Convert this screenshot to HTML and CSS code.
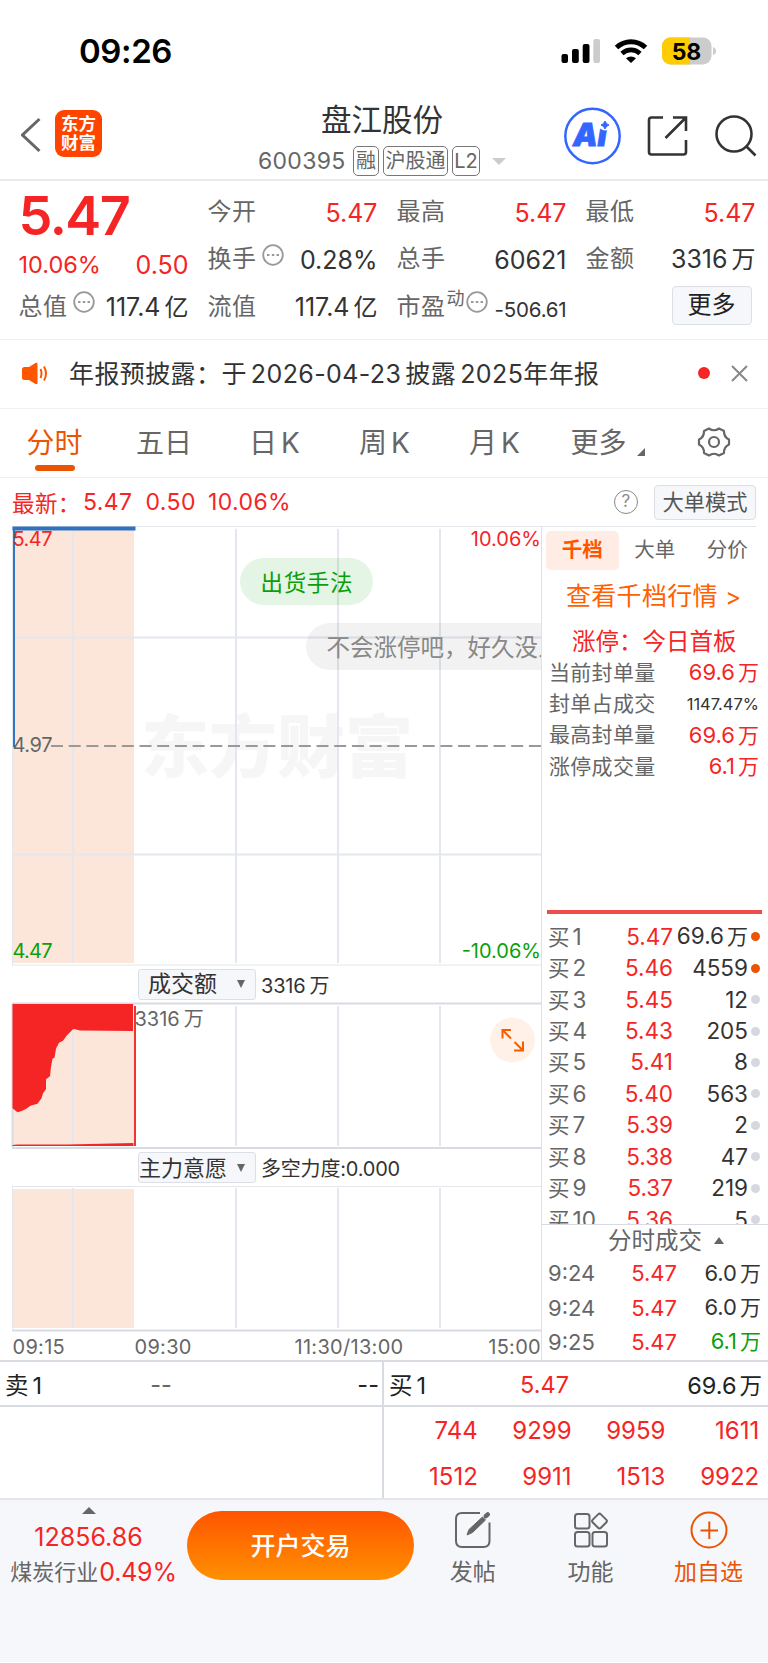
FILE: index.html
```html
<!DOCTYPE html>
<html lang="zh-CN">
<head>
    <meta charset="UTF-8">
    <meta name="viewport" content="width=device-width, initial-scale=1.0">
    <title>盘江股份 600395</title>
    <link rel="stylesheet" href="styles.css">
</head>
<body>
    <div class="status-bar">
        <span class="time">09:26</span>
        <svg class="status-icons" width="160" height="32" viewBox="558 35 160 32">
            <rect x="561.5" y="54" width="6.5" height="9" rx="2"/>
            <rect x="572" y="49" width="6.8" height="14" rx="2"/>
            <rect x="582.7" y="44" width="6.8" height="19" rx="2"/>
            <rect x="593.3" y="39" width="6.7" height="24" rx="2" fill="#ccc"/>
            <path d="M616.5 47.5a21 21 0 0 1 29 0" fill="none" stroke="#000" stroke-width="5"/>
            <path d="M622 53.500a13 13 0 0 1 18 0" fill="none" stroke="#000" stroke-width="4.600"/>
            <path d="M626 58.300a7.500 7.500 0 0 1 10 0l-5 4.800z"/>
            <rect x="662" y="37.500" width="49.500" height="27" rx="8.500" fill="#ccc"/>
            <path d="M690 37.500h-19.500a8.500 8.500 0 0 0-8.500 8.500v10a8.500 8.500 0 0 0 8.500 8.500H690z" fill="#ffcc00"/>
            <path d="M713 47q3 1 3 4t-3 4z" fill="#ccc"/>
            <text class="battery-text" x="686.500" y="59.500" text-anchor="middle">58</text>
        </svg>
    </div>

    <div class="header">
        <div class="header-left">
            <svg width="20" height="36" viewBox="21 118 20 36" fill="none" stroke="#666" stroke-width="3"><path d="M39.500 120L22.500 136l17 16"/></svg>
            <div class="logo">东方<br>财富</div>
        </div>
        <div class="header-title">
            <h1>盘江股份</h1>
            <div class="sub">
                <span class="code">600395</span>
                <span class="tag">融</span>
                <span class="tag tag-wide">沪股通</span>
                <span class="tag">L2</span>
                <i class="arrow"></i>
            </div>
        </div>
        <svg class="header-icons" width="200" height="60" viewBox="562 106 200 60" fill="none" stroke="#333" stroke-width="2.600">
            <circle cx="592.500" cy="136" r="27.200" stroke="#3366ff" stroke-width="2.500"/>
            <text class="ai" x="573 597.5" y="146" stroke="#3366ff" stroke-width=".8">Ai</text>
            <circle cx="605" cy="124" r="6.500" fill="#fff" stroke="none"/>
            <path d="M605 121q1 3 4 4q-3 1-4 4q-1-3-4-4q3-1 4-4z" fill="#3366ff" stroke="#3366ff" stroke-width="1"/>
            <path d="M663 117.500h-11.500q-2.500 0-2.500 2.500v32q0 2.500 2.500 2.500h32q2.500 0 2.500-2.500v-12M673 117.500h13V131M685.500 118L665.500 138"/>
            <circle cx="734" cy="134" r="17.500"/>
            <path d="M746.500 146.500l9 9"/>
        </svg>
    </div>

    <div class="quote">
        <div class="col col-price">
            <div class="big-price">5.47</div>
            <div class="row row-change red"><span class="percent">10.06%</span><span>0.50</span></div>
            <div class="row"><span class="label">总值<svg class="dots" width="22" height="22" viewBox="0 0 22 22"><circle cx="11" cy="11" r="9.800"/><path d="M5 11h2.500M9.800 11h2.500M14.500 11h2.500"/></svg></span><span>117.4<em>亿</em></span></div>
        </div>
        <div class="col">
            <div class="row"><span class="label">今开</span><span class="red">5.47</span></div>
            <div class="row"><span class="label">换手<svg class="dots" width="22" height="22" viewBox="0 0 22 22"><circle cx="11" cy="11" r="9.800"/><path d="M5 11h2.500M9.800 11h2.500M14.500 11h2.500"/></svg></span><span>0.28%</span></div>
            <div class="row"><span class="label">流值</span><span>117.4<em>亿</em></span></div>
        </div>
        <div class="col">
            <div class="row"><span class="label">最高</span><span class="red">5.47</span></div>
            <div class="row"><span class="label">总手</span><span>60621</span></div>
            <div class="row"><span class="label">市盈<sup>动</sup><svg class="dots dots-tight" width="22" height="22" viewBox="0 0 22 22"><circle cx="11" cy="11" r="9.800"/><path d="M5 11h2.500M9.800 11h2.500M14.500 11h2.500"/></svg></span><span class="pe">-506.61</span></div>
        </div>
        <div class="col">
            <div class="row"><span class="label">最低</span><span class="red">5.47</span></div>
            <div class="row"><span class="label">金额</span><span>3316<em>万</em></span></div>
            <div class="row row-more"><button class="more">更多</button></div>
        </div>
    </div>

    <div class="notice">
        <svg width="26" height="22" viewBox="22 362 26 22"><path d="M24.500 367h4.500l6.500-4q2-.8 2 1v19q0 1.800-2 1l-6.500-4H24.500q-2.500 0-2.500-2.500v-8q0-2.500 2.500-2.500z" fill="#ff5500"/><path d="M40.500 369q2 4.500 0 9M44 366.500q4 7 0 14" fill="none" stroke="#ff5500" stroke-width="2"/></svg>
        <p>年报预披露：于<em>2026-04-23</em><em>披露</em><em>2025</em>年年报</p>
        <i class="red-dot"></i>
        <svg width="17" height="17" viewBox="0 0 17 17" stroke="#888" stroke-width="2"><path d="M1 1l15 15M16 1L1 16"/></svg>
    </div>

    <div class="tabs">
        <a class="active">分时</a>
        <a>五日</a>
        <a>日<em>K</em></a>
        <a>周<em>K</em></a>
        <a>月<em>K</em></a>
        <a class="tab-more">更多<i></i></a>
        <svg width="34" height="32" viewBox="696 426 34 32" fill="none" stroke="#666" stroke-width="2.200" stroke-linejoin="round"><path d="M708 428.500q5 3.500 10 0l5 2.500q-.3 6 5 8.500v5q-5.300 2.500-5 8.500l-5 2.500q-5-3.500-10 0l-5-2.500q.3-6-5-8.500v-5q5.300-2.500 5-8.500z"/><circle cx="713" cy="442" r="5"/></svg>
    </div>

    <div class="latest">
        <span class="latest-label">最新：</span><span class="v1">5.47</span><span class="v2">0.50</span><span class="v3">10.06%</span>
        <span class="help">?</span>
        <button class="mode">大单模式</button>
    </div>

    <div class="main">
        <div class="charts">
            <svg class="chart" width="541" height="440" viewBox="0 526 541 440">
                <rect x="12" y="530" width="122" height="433" fill="#fce6da"/>
                <text class="watermark" x="141" y="772" textLength="272">东方财富</text>
                <path class="grid" d="M73 529v434M236 529v434M338 529v434M440 529v434M12 637.500h529M12 854.500h529"/>
                <path class="frame" d="M12 526.500h529M12.500 527v438M12 965h529"/>
                <path d="M51 746h490" stroke="#999" stroke-width="2" stroke-dasharray="12 5.700"/>
                <path d="M14 747V528.500" fill="none" stroke="#2f78c8" stroke-width="2"/>
                <path d="M12.500 528.500H135.500" fill="none" stroke="#2f72c0" stroke-width="4"/>
                <text class="red" x="12.500" y="546" textLength="40">5.47</text>
                <text class="red" x="541" y="546" text-anchor="end">10.06%</text>
                <text class="gray" x="12.500" y="752" textLength="40">4.97</text>
                <text class="green" x="12.500" y="958" textLength="40">4.47</text>
                <text class="green" x="541" y="958" text-anchor="end">-10.06%</text>
                <rect x="240" y="558" width="133" height="47" rx="23.500" fill="#00a000" fill-opacity=".1"/>
                <text class="pill-green" x="260.500" y="590.500" textLength="92">出货手法</text>
                <path d="M541 623H329.500a23.500 23.500 0 0 0 0 47H541z" fill="#000" fill-opacity=".05"/>
                <text class="pill-gray" x="326.500" y="655.500">不会涨停吧，好久没人</text>
            </svg>
            <div class="indicator">
                <span class="select">成交额<i></i></span><span>3316<em>万</em></span>
            </div>
            <svg class="chart" width="541" height="147" viewBox="0 1002 541 147">
                <rect x="12" y="1004" width="122" height="142" fill="#fce6da"/>
                <path class="grid" d="M73 1006v140M236 1006v140M338 1006v140M440 1006v140"/>
                <path class="frame frame-dark" d="M12 1003.500h529M12.500 1004v143M12 1148h529"/>
                <path d="M12.500 1004H133v27l-53-.5-5-1.200-2 0-6 6-4 5.500-4 2-3 6-1.500 9-2 1-1.500 8-1 9.500-4 3v10l-3 4-1.500 5-4 5.500-7 2-5 3.500-4.500 2-3.500 1-5-4z" fill="#f52525"/>
                <path d="M12.500 1146v-1l5-.6h50l66-1.400v3z" fill="#f52525"/>
                <path d="M135 1006v140" stroke="#f03535" stroke-width="2"/>
                <text class="gray" x="134.500" y="1025.500">3316<tspan dx="4">万</tspan></text>
                <circle cx="512.500" cy="1040" r="22.500" fill="#fff0e8"/>
                <path d="M511 1030h-8.500v8.500M503 1030.500l8 8M514 1050.500h9v-9M522.500 1050l-8-8" fill="none" stroke="#f55e00" stroke-width="2"/>
            </svg>
            <div class="indicator">
                <span class="select select-wide">主力意愿<i></i></span><span class="force">多空力度:0.000</span>
            </div>
            <svg class="chart" width="541" height="146" viewBox="0 1186 541 146">
                <rect x="12" y="1189" width="122" height="139" fill="#fce6da"/>
                <path class="grid" d="M73 1188v140M236 1188v140M338 1188v140M440 1188v140"/>
                <path class="frame" d="M12 1186.500h529M12.500 1187v142"/>
                <path class="frame frame-dark" d="M12 1330.500h529"/>
            </svg>
            <div class="axis"><span>09:15</span><span>09:30</span><span>11:30/13:00</span><span>15:00</span></div>
        </div>

        <div class="side">
            <div class="side-tabs"><span class="on">千档</span><span>大单</span><span>分价</span></div>
            <a class="depth-link">查看千档行情 <b>&gt;</b></a>
            <div class="limit-title red">涨停：今日首板</div>
            <div class="limit">
                <div><span>当前封单量</span><span class="red">69.6<em>万</em></span></div>
                <div><span>封单占成交</span><span class="small">1147.47%</span></div>
                <div><span>最高封单量</span><span class="red">69.6<em>万</em></span></div>
                <div><span>涨停成交量</span><span class="red">6.1<em>万</em></span></div>
            </div>
            <div class="book">
                <div><span>买<em>1</em></span><span class="red">5.47</span><span>69.6<em>万</em></span><i class="hot"></i></div>
                <div><span>买<em>2</em></span><span class="red">5.46</span><span>4559</span><i class="hot"></i></div>
                <div><span>买<em>3</em></span><span class="red">5.45</span><span>12</span><i></i></div>
                <div><span>买<em>4</em></span><span class="red">5.43</span><span>205</span><i></i></div>
                <div><span>买<em>5</em></span><span class="red">5.41</span><span>8</span><i></i></div>
                <div><span>买<em>6</em></span><span class="red">5.40</span><span>563</span><i></i></div>
                <div><span>买<em>7</em></span><span class="red">5.39</span><span>2</span><i></i></div>
                <div><span>买<em>8</em></span><span class="red">5.38</span><span>47</span><i></i></div>
                <div><span>买<em>9</em></span><span class="red">5.37</span><span>219</span><i></i></div>
                <div><span>买<em>10</em></span><span class="red">5.36</span><span>5</span><i></i></div>
            </div>
            <div class="deals-title">分时成交<i></i></div>
            <div class="deals">
                <div><span>9:24</span><span class="red">5.47</span><span>6.0<em>万</em></span></div>
                <div><span>9:24</span><span class="red">5.47</span><span>6.0<em>万</em></span></div>
                <div><span>9:25</span><span class="red">5.47</span><span class="green">6.1<em>万</em></span></div>
            </div>
        </div>
    </div>

    <div class="level">
        <div class="sell">
            <div class="level-head"><span>卖<em>1</em></span><span class="gray">--</span><span>--</span></div>
        </div>
        <div class="buy">
            <div class="level-head"><span>买<em>1</em></span><span class="red">5.47</span><span>69.6<em>万</em></span></div>
            <div class="queue red">
                <span>744</span><span>9299</span><span>9959</span><span>1611</span>
                <span>1512</span><span>9911</span><span>1513</span><span>9922</span>
            </div>
        </div>
    </div>

    <div class="footer">
        <div class="industry">
            <i></i>
            <div class="index red">12856.86</div>
            <div class="name">煤炭行业<span class="red">0.49%</span></div>
        </div>
        <button class="trade">开户交易</button>
        <div class="actions">
            <div>
                <svg width="40" height="40" viewBox="453 1510 40 40" fill="none" stroke="#666" stroke-width="2"><path d="M480 1513h-18q-6 0-6 6v22q0 6 6 6h21.500q6 0 6-6v-18.500"/><path d="M467 1535l2-5.500 13.500-12.500 3 3-13 12.500z" fill="#666" stroke-width="1"/><path d="M485.800 1516.200l2-1.800" stroke-width="4.500" stroke-linecap="round"/></svg>
                <span>发帖</span>
            </div>
            <div>
                <svg width="40" height="40" viewBox="571 1510 40 40" fill="none" stroke="#666" stroke-width="2"><rect x="575" y="1514" width="14.500" height="14.500" rx="2.500"/><rect x="575" y="1532" width="14.500" height="14.500" rx="2.500"/><rect x="592.500" y="1532" width="14.500" height="14.500" rx="2.500"/><rect x="593.800" y="1515.300" width="11.500" height="11.500" rx="2" transform="rotate(45 599.500 1521)"/></svg>
                <span>功能</span>
            </div>
            <div class="add">
                <svg width="40" height="40" viewBox="688.500 1510 40 40" fill="none" stroke="#ea5504" stroke-width="2"><circle cx="708.500" cy="1530" r="17.500"/><path d="M700 1530.500h17.500M708.800 1521.500v17.500"/></svg>
                <span>加自选</span>
            </div>
        </div>
    </div>
</body>
</html>
```
FILE: styles.css
```css
* {
    box-sizing: border-box;
}
body {
    margin: 0;
    width: 768px;
    background-color: #fff;
    color: #333;
    font-family: Inter, "Noto Sans CJK SC", sans-serif;
    font-size: 24px;
    text-autospace: no-autospace;
}
em, i {
    font-style: normal;
}
em {
    margin-left: 4px;
}
svg {
    flex: none;
}
button {
    font-family: inherit;
    padding: 0;
}
.red {
    color: #f52525;
    fill: #f52525;
}
.green {
    color: #0a9f0a;
    fill: #0a9f0a;
}
.gray {
    color: #666;
    fill: #666;
}

/* status bar */
.status-bar {
    height: 102px;
    display: flex;
    align-items: center;
    justify-content: space-between;
    padding: 0 50px 0 79px;
    color: #000;
}
.time {
    font-size: 33px;
    font-weight: 600;
    letter-spacing: -0.4px;
}
.battery-text {
    font-size: 23px;
    font-weight: 700;
}

/* header */
.header {
    height: 79px;
    border-bottom: 2px solid #ebebeb;
    display: grid;
    grid-template-columns: 258px 1fr 206px;
    padding-bottom: 9px;
}
.header-left {
    display: flex;
    align-items: center;
    gap: 14px;
    padding-left: 21px;
    padding-bottom: 8px;
    margin-top: 4px;
    height: 64px;
}
.header-left svg {
    margin-top: 1px;
}
.logo {
    width: 47px;
    height: 47px;
    margin-top: -1px;
    border-radius: 9px;
    background-color: #ff4400;
    color: #fff;
    font-size: 17.5px;
    font-weight: 700;
    line-height: 19px;
    text-align: center;
    padding-top: 4px;
}
.header-title h1 {
    margin: 0;
    font-size: 30.5px;
    font-weight: 400;
    line-height: 35px;
    padding-left: 63px;
}
.sub {
    display: flex;
    align-items: center;
    margin-top: 9px;
    height: 30px;
    color: #666;
}
.code {
    font-size: 23px;
    width: 95px;
    letter-spacing: 0.3px;
}
.tag {
    border: 1px solid #777;
    border-radius: 5px;
    width: 26px;
    height: 30px;
    margin-right: 4px;
    font-size: 20px;
    line-height: 28px;
    display: flex;
    justify-content: center;
}
.tag-wide {
    width: 65px;
}
.tag:nth-of-type(4) {
    width: 28px;
}
.arrow {
    border: 7px solid transparent;
    border-top-color: #ccc;
    border-bottom: 0;
    margin-left: 8px;
}
.header-icons {
    margin-top: 4px;
}
.ai {
    font-size: 31px;
    font-weight: 900;
    font-style: italic;
    fill: #3366ff;
}

/* quote */
.quote {
    height: 159px;
    border-bottom: 1px solid #efefef;
    display: grid;
    grid-template-columns: repeat(4, 170px);
    column-gap: 19px;
    padding: 8px 0 0 18.5px;
}
.row {
    height: 47.3px;
    display: flex;
    align-items: center;
    justify-content: space-between;
    white-space: nowrap;
    font-size: 25px;
    line-height: 30px;
}
.row em {
    font-size: 24px;
}
.label {
    display: flex;
    align-items: center;
    color: #666;
    font-size: 24px;
    letter-spacing: 0.5px;
    padding-bottom: 1px;
}
.big-price {
    height: 54px;
    line-height: 54px;
    font-size: 54px;
    font-weight: 600;
    letter-spacing: -1.5px;
    color: #f52525;
}
.row-change {
    height: 40.600px;
    padding-top: 4px;
}
.percent {
    font-size: 23.500px;
}
.dots {
    margin: -9px 0 0 5px;
    fill: none;
    stroke: #999;
    stroke-width: 1.8;
}
.dots-tight {
    margin-left: 1px;
}
.label sup {
    font-size: 18px;
    line-height: 18px;
    margin: -15px 0 0 1px;
}
.pe {
    font-size: 20.5px;
    letter-spacing: -0.2px;
    padding-top: 6px;
}
.row-more {
    justify-content: flex-end;
}
.more {
    width: 80px;
    height: 39px;
    margin-right: 4px;
    margin-bottom: 4px;
    border: 1px solid #dcdfe6;
    border-radius: 4px;
    background-color: #f6f7fa;
    color: #222;
    font-size: 24px;
    line-height: 36px;
}

/* notice */
.notice {
    height: 69px;
    border-bottom: 1px solid #efefef;
    display: flex;
    align-items: center;
    padding: 0 20px 2px 22px;
}
.notice p {
    margin: -3px auto 0 21px;
    font-size: 25px;
    letter-spacing: 0.4px;
}
.red-dot {
    width: 12px;
    height: 12px;
    border-radius: 50%;
    background-color: #f52525;
    margin-right: 21px;
}

/* tabs */
.tabs {
    height: 69px;
    border-bottom: 1px solid #efefef;
    display: grid;
    grid-template-columns: 109px 110px 111px 109px 111px 97px 1fr;
    align-items: center;
    justify-items: center;
    padding-bottom: 4px;
    font-size: 28px;
    color: #666;
}
.tabs svg {
    margin: 2px 0 0 12px;
}
.tabs a {
    position: relative;
}
.tabs .active {
    color: #ea5504;
}
.tabs .active::after {
    content: "";
    position: absolute;
    left: 9px;
    bottom: -10px;
    width: 40px;
    height: 6px;
    border-radius: 3px;
    background-color: #ea5504;
}
.tab-more i {
    position: absolute;
    right: -18px;
    bottom: 5px;
    border-left: 8px solid transparent;
    border-bottom: 8px solid #666;
}

/* latest price */
.latest {
    height: 48px;
    display: flex;
    align-items: center;
    padding: 0 12px 0 12px;
    color: #f52525;
    font-size: 23px;
    letter-spacing: 0.4px;
}
.latest-label {
    width: 71px;
    white-space: nowrap;
    font-size: 22.5px;
}
.v1, .v2 {
    width: 62.500px;
}
.v3 {
    margin-right: auto;
}
.help {
    width: 24px;
    height: 24px;
    border: 1.5px solid #888;
    border-radius: 50%;
    color: #888;
    font-size: 17px;
    line-height: 21px;
    text-align: center;
    margin-right: 16px;
}
.mode {
    width: 102px;
    height: 35px;
    border: 1px solid #dcdfe6;
    border-radius: 4px;
    background-color: #f6f7fa;
    color: #555;
    font-size: 21.3px;
    line-height: 32px;
}

/* charts */
.main {
    display: flex;
    height: 834px;
}
.charts {
    width: 541px;
}
.chart {
    display: block;
    font-size: 20px;
}
.grid {
    stroke: #e4e7ed;
    stroke-width: 2;
}
.frame {
    stroke: #e4e6eb;
}
.frame-dark {
    stroke: #d8dbe2;
    stroke-width: 2;
}
.watermark {
    font-size: 68px;
    font-weight: 900;
    fill: #f6f6f6;
}
.pill-green {
    font-size: 22.5px;
    fill: #0a9f0a;
}
.pill-gray {
    font-size: 23.5px;
    fill: #888;
}
.indicator {
    height: 36px;
    display: flex;
    align-items: center;
    padding-left: 138px;
    font-size: 20px;
    letter-spacing: -0.2px;
}
.indicator + .chart + .indicator {
    height: 37px;
}
.select {
    width: 118px;
    height: 31px;
    margin-right: 5px;
    padding: 0 10px 0 9px;
    border: 1px solid #dcdfe6;
    border-radius: 3px;
    background-color: #f6f7fa;
    font-size: 23px;
    letter-spacing: 0;
    line-height: 28px;
    display: flex;
    align-items: center;
    justify-content: space-between;
    white-space: nowrap;
}
.select-wide {
    padding-left: 0;
    font-size: 22px;
}
.select i {
    border: 4.5px solid transparent;
    border-top: 8px solid #666;
    border-bottom: 0;
}
.axis {
    height: 29px;
    display: grid;
    grid-template-columns: 122px 160px 1fr auto;
    padding: 0 0 0 12.5px;
    align-items: center;
    font-size: 20px;
    letter-spacing: 0.3px;
    color: #666;
}

/* order book */
.side {
    width: 227px;
    border-left: 1px solid #dfe1e8;
    display: flex;
    flex-direction: column;
}
.side-tabs {
    border-top: 1px solid #e4e6eb;
    margin-right: 12px;
    padding: 4px 0 0 4px;
    display: flex;
    font-size: 20.5px;
    line-height: 38px;
    text-align: center;
    color: #666;
}
.side-tabs span {
    flex: none;
    width: 72.5px;
    height: 39px;
}
.side-tabs .on {
    border-radius: 5px;
    background-color: #ffede5;
    color: #ff5500;
    font-weight: 700;
}
.depth-link {
    height: 50px;
    padding-left: 24px;
    line-height: 52px;
    font-size: 25px;
    letter-spacing: 0.3px;
    color: #ff6000;
    white-space: nowrap;
}
.depth-link b {
    font-weight: 400;
    font-size: 24px;
}
.limit-title {
    height: 37px;
    line-height: 43px;
    padding-left: 30px;
    font-size: 23.5px;
    white-space: nowrap;
}
.limit {
    height: 257px;
    margin: 0 6px 0 5px;
    border-bottom: 4px solid #ee4b4b;
}
.limit div {
    height: 31.4px;
    padding: 0 3px 0 2px;
    display: flex;
    align-items: center;
    justify-content: space-between;
    font-size: 22px;
    line-height: 28px;
    white-space: nowrap;
}
.limit em, .book em, .deals em {
    margin-left: 3px;
    font-size: 21px;
}
.limit span:first-child {
    font-size: 21px;
    letter-spacing: 0.3px;
    color: #666;
}
.limit .small {
    font-size: 16.5px;
}
.book {
    height: 310px;
    overflow: hidden;
    padding-top: 7px;
}
.book div {
    height: 31.45px;
    display: grid;
    grid-template-columns: 54px 71px 75px 9px;
    align-items: center;
    padding-left: 6px;
    font-size: 22.5px;
    line-height: 28px;
    white-space: nowrap;
}
.book span, .deals span {
    text-align: right;
}
.book span:first-child, .deals span:first-child {
    text-align: left;
    color: #666;
}
.book span:first-child {
    font-size: 21.5px;
}
.book span:first-child em {
    font-size: 22.5px;
}
.book i {
    width: 9px;
    height: 9px;
    margin-left: 3px;
    border-radius: 50%;
    background-color: #d5d8de;
}
.book .hot {
    background-color: #ea5504;
}
.deals-title {
    border-top: 1px solid #d8dbe2;
    height: 32px;
    line-height: 30px;
    padding-left: 66px;
    font-size: 23.5px;
    color: #666;
    display: flex;
    align-items: center;
}
.deals-title i {
    border: 5.5px solid transparent;
    border-bottom: 7px solid #666;
    border-top: 0;
    margin-left: 12px;
}
.deals div {
    height: 34.4px;
    display: grid;
    grid-template-columns: 60px 69px 84px;
    padding-left: 6px;
    align-items: center;
    font-size: 22px;
    line-height: 28px;
}

/* level one */
.level {
    height: 140px;
    display: flex;
    border-top: 2px solid #d8dbe2;
    border-bottom: 2px solid #e4e6e9;
}
.sell {
    width: 384px;
    border-right: 2px solid #d8dbe2;
}
.buy {
    flex: 1;
}
.level-head {
    height: 45px;
    border-bottom: 2px solid #d8dbe2;
    display: grid;
    grid-template-columns: 1fr 1fr 1fr;
    align-items: center;
    padding: 1px 3px 0 5px;
    font-size: 23.5px;
    color: #222;
}
.level-head span:nth-child(2) {
    text-align: center;
    padding-right: 62px;
}
.buy .level-head {
    padding-right: 6px;
}
.level-head .red {
    color: #f52525;
}
.level-head span:nth-child(3) {
    text-align: right;
}
.level-head span:nth-child(3) em {
    margin-left: 3px;
    font-size: 22.5px;
}
.queue {
    display: grid;
    grid-template-columns: repeat(4, 93.8px);
    grid-auto-rows: 46px;
    line-height: 48px;
    text-align: right;
    font-size: 24px;
}

/* footer */
.footer {
    height: 162px;
    background-color: #f6f7fa;
    display: flex;
    align-items: flex-start;
}
.industry {
    width: 187px;
    padding-top: 7px;
    display: flex;
    flex-direction: column;
    align-items: center;
    padding-right: 10px;
}
.industry i {
    border: 7px solid transparent;
    border-bottom: 7px solid #666;
    border-top: 0;
}
.index {
    font-size: 25px;
    line-height: 34px;
    margin-top: 6px;
}
.name {
    font-size: 22px;
    line-height: 36px;
    color: #666;
    display: flex;
    white-space: nowrap;
    padding-left: 10px;
}
.name span {
    font-size: 25px;
    margin-left: 1px;
    letter-spacing: -0.2px;
}
.trade {
    width: 227px;
    height: 69px;
    margin-top: 11px;
    border: 0;
    border-radius: 35px;
    background: linear-gradient(#ff5500, #ff9000);
    color: #fff;
    font-size: 25px;
    font-weight: 500;
    line-height: 66px;
}
.actions {
    flex: 1;
    display: grid;
    grid-template-columns: 117.500px 118px 118px;
    padding-top: 10px;
}
.actions div {
    display: flex;
    flex-direction: column;
    align-items: center;
    font-size: 23px;
    line-height: 44px;
    color: #666;
}
.actions .add {
    color: #ea5504;
}
```
